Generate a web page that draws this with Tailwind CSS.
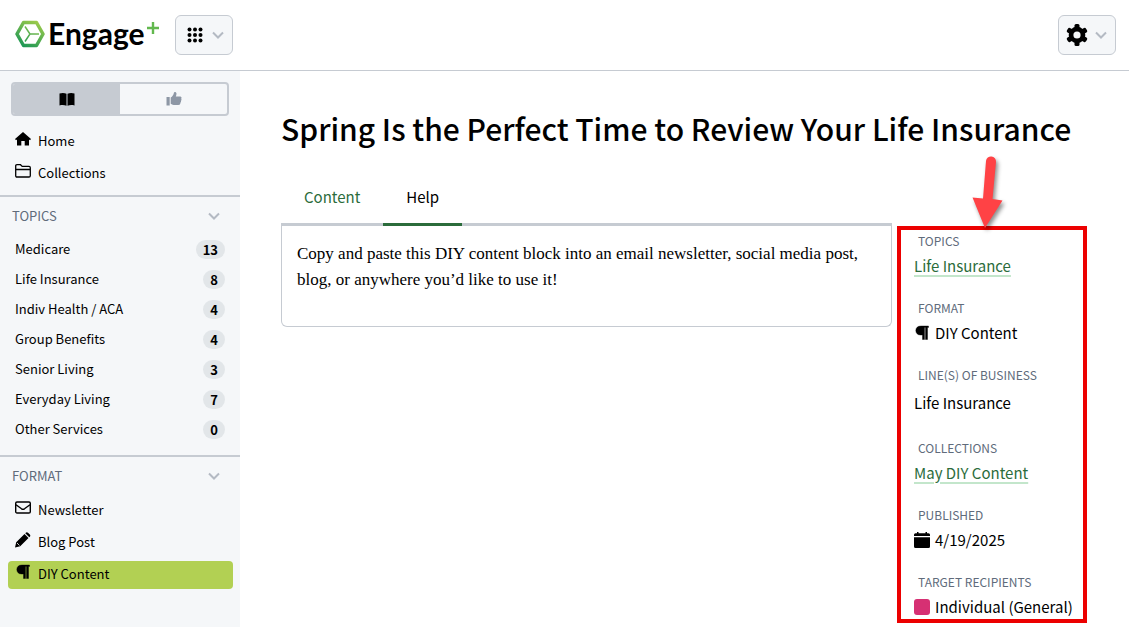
<!DOCTYPE html>
<html lang="en">
<head>
    <meta charset="UTF-8">
    <meta name="viewport" content="width=device-width, initial-scale=1.0">
    <title>Engage+</title>
    <script src="https://cdn.jsdelivr.net/npm/@tailwindcss/browser@4"></script>
</head>
<body class="min-h-screen flex flex-col bg-white text-black font-['Noto_Sans_CJK_SC','Noto_Sans',sans-serif]">
    <!-- Shared icons -->
    <svg class="hidden">
        <symbol id="chevron" viewBox="0 0 12 8"><path d="M1 1.500l5 5 5-5" fill="none" stroke="currentColor" stroke-width="2"/></symbol>
        <symbol id="pilcrow" viewBox="0 0 16 16"><path d="M7 1h7.500v1.500h-1V14.500h-2V2.500h-1V14.500h-2V10H6.500C3.500 10 1.800 8 1.800 5.500S3.500 1 7 1z" fill="currentColor" stroke="currentColor" stroke-width=".4"/></symbol>
    </svg>

    <!-- Header -->
    <header class="h-[71px] flex items-center justify-between pl-[15px] pr-[13px] border-b border-[#c6cbd2]">
        <div class="flex items-center gap-4">
            <a href="#" class="flex items-center gap-[3px] pb-[3px]" aria-label="Engage+">
                <svg class="w-[30px] h-7" viewBox="0 0 30 28" fill="none">
                    <defs>
                        <linearGradient id="leaf" x1="22" y1="0" x2="8" y2="28" gradientUnits="userSpaceOnUse">
                            <stop offset="0" stop-color="#a3cd4a"/>
                            <stop offset="1" stop-color="#159456"/>
                        </linearGradient>
                    </defs>
                    <path d="M8.500 2.500h13L28 14l-6.500 11.500h-13L2 14z" stroke="url(#leaf)" stroke-width="3.500" stroke-linejoin="round"/>
                    <path d="M10 6.500l5 7.500-5 7.500M15 14l9-.1" stroke="url(#leaf)" stroke-width="1.500"/>
                </svg>
                <span class="flex items-start gap-0.5 pb-0.5">
                    <span class="font-['Lato',sans-serif] font-bold text-[30px] leading-9">Engage</span>
                    <svg class="w-3 h-3 mt-[7px]" viewBox="0 0 12 12"><path d="M6 0v12M0 6h12" stroke="#62b84e" stroke-width="2.400"/></svg>
                </span>
            </a>
            <button type="button" aria-label="Apps" class="w-[58px] h-10 flex items-center justify-center gap-[9px] pl-[3px] rounded-md border border-[#c6cbd2] bg-[#f5f7f9]">
                <svg class="w-4 h-4" viewBox="0 0 16 16">
                    <circle cx="2.500" cy="2.500" r="2"/><circle cx="8" cy="2.500" r="2"/><circle cx="13.500" cy="2.500" r="2"/>
                    <circle cx="2.500" cy="8" r="2"/><circle cx="8" cy="8" r="2"/><circle cx="13.500" cy="8" r="2"/>
                    <circle cx="2.500" cy="13.500" r="2"/><circle cx="8" cy="13.500" r="2"/><circle cx="13.500" cy="13.500" r="2"/>
                </svg>
                <svg class="w-3 h-2 text-[#b4bac3]"><use href="#chevron"/></svg>
            </button>
        </div>
        <button type="button" aria-label="Settings" class="w-[58px] h-10 flex items-center justify-center gap-[7px] pr-0.5 rounded-md border border-[#c6cbd2] bg-[#f5f7f9]">
            <svg class="w-[22px] h-[22px]" viewBox="0 0 22 22">
                <rect x="8.500" y="0" width="5" height="22" rx="1.500"/>
                <rect x="8.500" y="0" width="5" height="22" rx="1.500" transform="rotate(60 11 11)"/>
                <rect x="8.500" y="0" width="5" height="22" rx="1.500" transform="rotate(120 11 11)"/>
                <circle cx="11" cy="11" r="8.300"/>
                <circle cx="11" cy="11" r="3.600" fill="#f5f7f9"/>
            </svg>
            <svg class="w-3 h-2 text-[#b4bac3]"><use href="#chevron"/></svg>
        </button>
    </header>

    <div class="flex flex-1">
        <!-- Sidebar -->
        <nav class="w-60 shrink-0 bg-[#f5f7f9] text-[13px]">
            <div class="h-[34px] mx-[11px] mt-[11px] flex rounded border-2 border-[#c6cbd2] overflow-hidden">
                <button type="button" aria-label="Library" class="flex-1 flex items-center justify-center bg-[#c6cbd2]">
                    <svg class="w-4 h-4" viewBox="0 0 16 16"><path d="M.5 2.500C3 1.700 5.500 1.800 7.500 2.800v12C5.500 13.800 3 13.700.5 14.400zM15.500 2.500C13 1.700 10.500 1.800 8.500 2.800v12c2-1 4.500-1.100 7-.4z"/></svg>
                </button>
                <button type="button" aria-label="Recommended" class="flex-1 flex items-center justify-center">
                    <svg class="w-4 h-4" viewBox="0 0 16 16" fill="#8d97a5"><path d="M.5 6h3.200v8.500H.5zM4.700 6.500C6.500 5.500 7.500 4 8 1.500c.2-.8 2.500-.8 2.500 1.300 0 1-.4 1.900-.7 2.700h4.400c1.300 0 1.700 1.300 1 2.200.5.700.4 1.600-.3 2.100.3.800 0 1.600-.6 2 .2 1.400-.6 2.200-2 2.200H9c-1.800 0-3-.6-4.300-1.300z"/></svg>
                </button>
            </div>

            <div class="mt-[11px] pl-[15px] pb-2 flex flex-col gap-1 border-b-2 border-[#c6cbd2]">
                <a href="#" class="h-7 flex items-center gap-[7px]">
                    <svg class="w-4 h-4 mb-1" viewBox="0 0 16 16"><path d="M8 1l8 7-1 1.200-1-.7V14.500H9.700V10H6.300v4.500H2V8.500l-1 .7L0 8z"/></svg>
                    Home
                </a>
                <a href="#" class="h-7 flex items-center gap-[7px]">
                    <svg class="w-4 h-4 mb-1" viewBox="0 0 16 16" fill="none" stroke="#000" stroke-width="1.300"><path d="M.7 3q0-1.300 1.300-1.300h3.500l1.700 1.700H14q1.300 0 1.300 1.300v8q0 1.300-1.300 1.300H2q-1.300 0-1.300-1.300zM.7 6.500h14.600"/></svg>
                    Collections
                </a>
            </div>

            <div class="pt-[9px] pb-[11px] border-b-2 border-[#c6cbd2]">
                <button type="button" class="w-full flex items-center justify-between pl-3 pr-5 leading-5 text-[#606b7b]">
                    TOPICS
                    <svg class="w-3 h-2 text-[#b4bac3]"><use href="#chevron"/></svg>
                </button>
                <ul class="mt-2 px-[15px]">
                    <li class="h-[30px] flex items-center justify-between"><a href="#">Medicare</a><span class="px-[7px] rounded-full bg-[#e2e6e9] leading-[19px] font-bold">13</span></li>
                    <li class="h-[30px] flex items-center justify-between"><a href="#">Life Insurance</a><span class="px-[7px] rounded-full bg-[#e2e6e9] leading-[19px] font-bold">8</span></li>
                    <li class="h-[30px] flex items-center justify-between"><a href="#">Indiv Health / ACA</a><span class="px-[7px] rounded-full bg-[#e2e6e9] leading-[19px] font-bold">4</span></li>
                    <li class="h-[30px] flex items-center justify-between"><a href="#">Group Benefits</a><span class="px-[7px] rounded-full bg-[#e2e6e9] leading-[19px] font-bold">4</span></li>
                    <li class="h-[30px] flex items-center justify-between"><a href="#">Senior Living</a><span class="px-[7px] rounded-full bg-[#e2e6e9] leading-[19px] font-bold">3</span></li>
                    <li class="h-[30px] flex items-center justify-between"><a href="#">Everyday Living</a><span class="px-[7px] rounded-full bg-[#e2e6e9] leading-[19px] font-bold">7</span></li>
                    <li class="h-[30px] flex items-center justify-between"><a href="#">Other Services</a><span class="px-[7px] rounded-full bg-[#e2e6e9] leading-[19px] font-bold">0</span></li>
                </ul>
            </div>

            <div class="pt-[9px]">
                <button type="button" class="w-full flex items-center justify-between pl-3 pr-5 leading-5 text-[#606b7b]">
                    FORMAT
                    <svg class="w-3 h-2 text-[#b4bac3]"><use href="#chevron"/></svg>
                </button>
                <div class="mt-[11px] pl-2 pr-[7px] flex flex-col gap-1">
                    <a href="#" class="h-7 pl-[7px] pb-0.5 flex items-center gap-[7px]">
                        <svg class="w-4 h-4 mb-1" viewBox="0 0 16 16" fill="none" stroke="#000" stroke-width="1.400"><rect x=".7" y="2" width="14.600" height="11" rx="1.300"/><path d="M1 4.800l5.500 4q1.500 1 3 0L15 4.800"/></svg>
                        Newsletter
                    </a>
                    <a href="#" class="h-7 pl-[7px] pb-0.5 flex items-center gap-[7px]">
                        <svg class="w-4 h-4 mb-1" viewBox="0 0 16 16"><path d="M9.500 2l4 4-8.300 8.300L0 15.500l1.200-5.200zM10.300 1.200l.5-.5q1-1 2.200 0l1.800 1.800q1 1.200 0 2.200l-.5.500z"/><path d="M2 11l2.500 2.500" stroke="#f5f7f9" stroke-width=".8"/></svg>
                        Blog Post
                    </a>
                    <a href="#" class="h-7 pl-[7px] pb-0.5 flex items-center gap-[7px] rounded bg-[#b2d053]">
                        <svg class="w-4 h-4 mb-1"><use href="#pilcrow"/></svg>
                        DIY Content
                    </a>
                </div>
            </div>
        </nav>

        <!-- Article -->
        <main class="flex-1 pt-[37px] pl-[41px] pr-[42px]">
            <h1 class="text-[30px] leading-10 font-medium">Spring Is the Perfect Time to Review Your Life Insurance</h1>
            <div class="mt-6 flex items-start gap-[5px] text-[15px]">
                <section class="flex-1">
                    <div role="tablist" class="flex border-b-3 border-[#c6cbd2]">
                        <button type="button" role="tab" class="h-[51px] px-[23px] text-[#2b6c3b]">Content</button>
                        <button type="button" role="tab" aria-selected="true" class="h-[54px] -mb-[3px] px-[23px] pb-[3px] shadow-[inset_0_-3px_0_#2b6c3b]">Help</button>
                    </div>
                    <div role="tabpanel" class="px-[15px] pt-[15px] pb-[33px] border border-t-0 border-[#c6cbd2] rounded-b-md font-['Liberation_Serif',serif] text-[17px] leading-[26px]">
                        <p>Copy and paste this DIY content block into an email newsletter, social media post, blog, or anywhere you’d like to use it!</p>
                    </div>
                </section>

                <!-- Details, with a callout arrow -->
                <aside class="relative w-[190px] mt-[54px] pl-[13px] pt-px flex flex-col gap-5 border-4 border-[#ec0000] whitespace-nowrap">
                    <svg class="absolute -top-[78px] left-[62px] w-10 h-20 drop-shadow-[2px_3px_2px_rgba(0,0,0,0.45)]" viewBox="0 0 40 80">
                        <path d="M23 9a5 5 0 0 1 10 1L29.500 47l10 1.500L22 76 9.500 45.500l10.500 1z" fill="#ff4245"/>
                    </svg>
                    <div>
                        <h2 class="pl-1 text-xs leading-5 text-[#606b7b]">TOPICS</h2>
                        <p class="mt-[3px] leading-6"><a href="#" class="text-[#2b6c3b] underline decoration-2 decoration-[#c3e6cb] underline-offset-3">Life Insurance</a></p>
                    </div>
                    <div>
                        <h2 class="pl-1 text-xs leading-5 text-[#606b7b]">FORMAT</h2>
                        <p class="mt-[3px] leading-6 flex items-center gap-[5px]"><svg class="w-4 h-4"><use href="#pilcrow"/></svg>DIY Content</p>
                    </div>
                    <div>
                        <h2 class="pl-1 text-xs leading-5 text-[#606b7b]">LINE(S) OF BUSINESS</h2>
                        <p class="mt-[3px] leading-[30px]">Life Insurance</p>
                    </div>
                    <div>
                        <h2 class="pl-1 text-xs leading-5 text-[#606b7b]">COLLECTIONS</h2>
                        <p class="mt-[3px] leading-6"><a href="#" class="text-[#2b6c3b] underline decoration-2 decoration-[#c3e6cb] underline-offset-3">May DIY Content</a></p>
                    </div>
                    <div>
                        <h2 class="pl-1 text-xs leading-5 text-[#606b7b]">PUBLISHED</h2>
                        <p class="mt-[3px] leading-6 flex items-center gap-[5px]">
                            <svg class="w-4 h-4" viewBox="0 0 16 16"><path d="M3 0h1.500v1.300h7V0H13v1.300h1.500q1.500 0 1.500 1.500V4H0V2.800Q0 1.300 1.500 1.300H3zM0 5.200h16v9.300q0 1.500-1.500 1.500h-13Q0 16 0 14.500z"/></svg>
                            4/19/2025
                        </p>
                    </div>
                    <div>
                        <h2 class="pl-1 text-xs leading-5 text-[#606b7b]">TARGET RECIPIENTS</h2>
                        <p class="mt-[3px] leading-6 flex items-center gap-[5px]"><span class="w-4 h-4 shrink-0 rounded-[3px] bg-[#d63073]"></span>Individual (General)</p>
                    </div>
                </aside>
            </div>
        </main>
    </div>
</body>
</html>
